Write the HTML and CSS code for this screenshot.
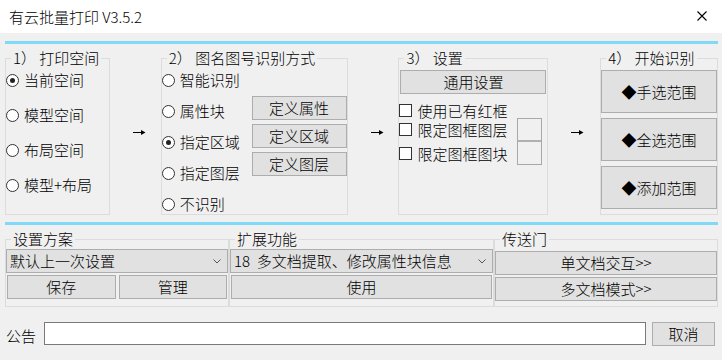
FILE: index.html
```html
<!DOCTYPE html>
<html lang="zh-CN">
<head>
    <meta charset="UTF-8">
    <title>有云批量打印 V3.5.2</title>
    <link rel="stylesheet" href="styles.css">
</head>
<body>
<div class="window">
    <!-- Title bar -->
    <header class="titlebar">
        <span class="title">有云批量打印 V3.5.2</span>
        <svg class="close" width="10" height="10" viewBox="0 0 10 10">
            <path d="M0.5 0.5 L9.5 9.5 M9.5 0.5 L0.5 9.5" stroke="#000" stroke-width="1.1" fill="none"/>
        </svg>
    </header>

    <main class="content">
        <div class="rule"></div>

        <!-- Steps -->
        <section class="steps">
            <fieldset class="group group-space">
                <legend>1） 打印空间</legend>
                <div class="radio-list wide">
                    <label class="option"><span class="radio checked"></span>当前空间</label>
                    <label class="option"><span class="radio"></span>模型空间</label>
                    <label class="option"><span class="radio"></span>布局空间</label>
                    <label class="option"><span class="radio"></span>模型+布局</label>
                </div>
            </fieldset>

            <div class="arrow"><svg width="13" height="5" viewBox="0 0 13 5"><path d="M0 2.5 H9" stroke="#000" stroke-width="1"/><path d="M8 0 L12.5 2.5 L8 5 Z" fill="#000"/></svg></div>

            <fieldset class="group group-name">
                <legend>2） 图名图号识别方式</legend>
                <div class="name-body">
                    <div class="radio-list">
                        <label class="option"><span class="radio"></span>智能识别</label>
                        <label class="option"><span class="radio"></span>属性块</label>
                        <label class="option"><span class="radio checked"></span>指定区域</label>
                        <label class="option"><span class="radio"></span>指定图层</label>
                        <label class="option"><span class="radio"></span>不识别</label>
                    </div>
                    <div class="define-list">
                        <button class="btn">定义属性</button>
                        <button class="btn">定义区域</button>
                        <button class="btn">定义图层</button>
                    </div>
                </div>
            </fieldset>

            <div class="arrow"><svg width="13" height="5" viewBox="0 0 13 5"><path d="M0 2.5 H9" stroke="#000" stroke-width="1"/><path d="M8 0 L12.5 2.5 L8 5 Z" fill="#000"/></svg></div>

            <fieldset class="group group-settings">
                <legend>3） 设置</legend>
                <button class="btn btn-general">通用设置</button>
                <div class="settings-body">
                    <div class="check-list">
                        <label class="option check"><span class="checkbox"></span>使用已有红框</label>
                        <label class="option check"><span class="checkbox"></span>限定图框图层</label>
                        <label class="option check last"><span class="checkbox"></span>限定图框图块</label>
                    </div>
                    <div class="pickers">
                        <div class="picker"></div>
                        <div class="picker"></div>
                    </div>
                </div>
            </fieldset>

            <div class="arrow"><svg width="13" height="5" viewBox="0 0 13 5"><path d="M0 2.5 H9" stroke="#000" stroke-width="1"/><path d="M8 0 L12.5 2.5 L8 5 Z" fill="#000"/></svg></div>

            <fieldset class="group group-start">
                <legend>4） 开始识别</legend>
                <div class="start-list">
                    <button class="btn btn-big">◆手选范围</button>
                    <button class="btn btn-big">◆全选范围</button>
                    <button class="btn btn-big">◆添加范围</button>
                </div>
            </fieldset>
        </section>

        <div class="rule rule-lower"></div>

        <!-- Tools -->
        <section class="tools">
            <fieldset class="group tool-plan">
                <legend>设置方案</legend>
                <div class="combo">
                    <span>默认上一次设置</span>
                    <svg width="8" height="5" viewBox="0 0 8 5"><path d="M0.5 0.5 L4 4 L7.5 0.5" stroke="#555" stroke-width="1" fill="none"/></svg>
                </div>
                <div class="btn-row">
                    <button class="btn">保存</button>
                    <button class="btn">管理</button>
                </div>
            </fieldset>

            <fieldset class="group tool-ext">
                <legend>扩展功能</legend>
                <div class="combo">
                    <span>18&nbsp;&nbsp;多文档提取、修改属性块信息</span>
                    <svg width="8" height="5" viewBox="0 0 8 5"><path d="M0.5 0.5 L4 4 L7.5 0.5" stroke="#555" stroke-width="1" fill="none"/></svg>
                </div>
                <div class="btn-row">
                    <button class="btn">使用</button>
                </div>
            </fieldset>

            <fieldset class="group tool-portal">
                <legend>传送门</legend>
                <button class="btn btn-portal">单文档交互&gt;&gt;</button>
                <button class="btn btn-portal">多文档模式&gt;&gt;</button>
            </fieldset>
        </section>

        <!-- Notice -->
        <div class="notice">
            <span class="notice-label">公告</span>
            <input class="notice-input" type="text">
            <button class="btn btn-cancel">取消</button>
        </div>
    </main>
</div>
</body>
</html>
```

FILE: styles.css
```css
* {
    box-sizing: border-box;
}

body {
    margin: 0;
    padding: 0;
    background-color: #f0f0f0;
    font-family: "Noto Sans CJK SC", "Liberation Sans", sans-serif;
    font-size: 15px;
    font-weight: 300;
    line-height: 20px;
    color: #000;
}

.window {
    width: 722px;
    height: 360px;
    overflow: hidden;
    background-color: #f0f0f0;
}

/* Title bar */
.titlebar {
    height: 33px;
    background-color: #fff;
    display: flex;
    align-items: center;
    justify-content: space-between;
    padding: 0 15px 0 9px;
}

.title {
    line-height: 20px;
}

.close {
    display: block;
    margin-top: -2px;
}

.content {
    padding: 0 4px 0 5px;
}

.rule {
    height: 3px;
    margin-top: 8px;
    background-color: #80d9f7;
}

.rule-lower {
    margin-top: 7px;
}

/* Group boxes */
.group {
    margin: 0;
    padding: 0;
    min-width: 0;
    border: 1px solid #dcdcdc;
}

.group legend {
    padding: 0 2px;
    margin-left: 5px;
    line-height: 18px;
}

.steps {
    display: flex;
    margin-top: 5px;
    height: 166px;
}

.group-space {
    width: 105px;
}

.group-name {
    width: 187px;
}

.group-settings {
    width: 150px;
}

.group-start {
    width: 118px;
}

.arrow {
    width: 51px;
    display: flex;
    align-items: center;
    padding-left: 23px;
}

.arrow:last-of-type {
    width: 52px;
}

.arrow svg {
    display: block;
}

/* Radio / checkbox options */
.radio-list {
    display: flex;
    flex-direction: column;
    gap: 11px;
    padding-top: 3px;
}

.radio-list.wide {
    gap: 15px;
}

.option {
    display: flex;
    align-items: center;
    height: 20px;
    white-space: nowrap;
}

.radio {
    width: 13px;
    height: 13px;
    border: 1px solid #333;
    border-radius: 50%;
    background-color: #fff;
    margin-right: 5px;
    display: flex;
    align-items: center;
    justify-content: center;
    flex-shrink: 0;
}

.radio.checked::after {
    content: "";
    width: 5px;
    height: 5px;
    border-radius: 50%;
    background-color: #222;
}

.checkbox {
    width: 13px;
    height: 13px;
    border: 1px solid #333;
    background-color: #fff;
    margin-right: 5px;
    flex-shrink: 0;
}

/* Buttons */
.btn {
    font-family: inherit;
    font-size: 15px;
    font-weight: 300;
    line-height: 20px;
    color: #000;
    background-color: #e1e1e1;
    border: 1px solid #adadad;
    border-radius: 0;
    padding: 0;
    margin: 0;
    height: 24px;
    display: block;
}

.name-body {
    display: flex;
}

.name-body .radio-list {
    flex: 1;
}

.define-list {
    width: 95px;
    display: flex;
    flex-direction: column;
    gap: 4px;
    margin-top: 29px;
}

.define-list .btn {
    width: 95px;
}

.btn-general {
    width: 146px;
    margin: 3px 0 0 1px;
}

.settings-body {
    display: flex;
    justify-content: space-between;
    margin-top: 7px;
}

.check {
    height: 19px;
}

.check.last {
    margin-top: 5px;
}

.pickers {
    width: 25px;
    height: 47px;
    margin: 17px 5px 0 0;
    border: 1px solid #a8a8a8;
}

.picker {
    height: 22px;
}

.picker:first-child {
    height: 23px;
    border-bottom: 2px solid #b0b0b0;
}

.start-list {
    display: flex;
    flex-direction: column;
    gap: 5px;
    margin-top: 3px;
}

.btn-big {
    width: 100%;
    height: 43px;
}

/* Tools */
.tools {
    display: flex;
    margin-top: 5px;
    height: 77px;
}

.tool-plan {
    width: 224px;
}

.tool-ext {
    width: 265px;
}

.tool-portal {
    width: 224px;
}

.combo {
    height: 24px;
    margin-top: 1px;
    background-color: #e1e1e1;
    border: 1px solid #adadad;
    display: flex;
    align-items: center;
    justify-content: space-between;
    padding: 0 6px 0 3px;
    white-space: nowrap;
}

.combo svg {
    display: block;
    flex-shrink: 0;
}

.btn-row {
    display: flex;
    gap: 3px;
    margin-top: 2px;
    padding: 0 1px;
}

.btn-row .btn {
    flex: 1;
}

.btn-portal {
    width: 100%;
    margin-top: 3px;
}

.btn-portal + .btn-portal {
    margin-top: 2px;
}

/* Notice */
.notice {
    display: flex;
    align-items: flex-start;
    margin-top: 15px;
    padding-left: 1px;
}

.notice-label {
    padding-top: 4px;
    width: 38px;
}

.notice-input {
    width: 602px;
    height: 23px;
    border: 1px solid #7a7a7a;
    background-color: #fff;
    margin: 0;
    padding: 0 3px;
    font-family: inherit;
    font-size: 15px;
}

.btn-cancel {
    width: 63px;
    margin-left: 6px;
}
```
